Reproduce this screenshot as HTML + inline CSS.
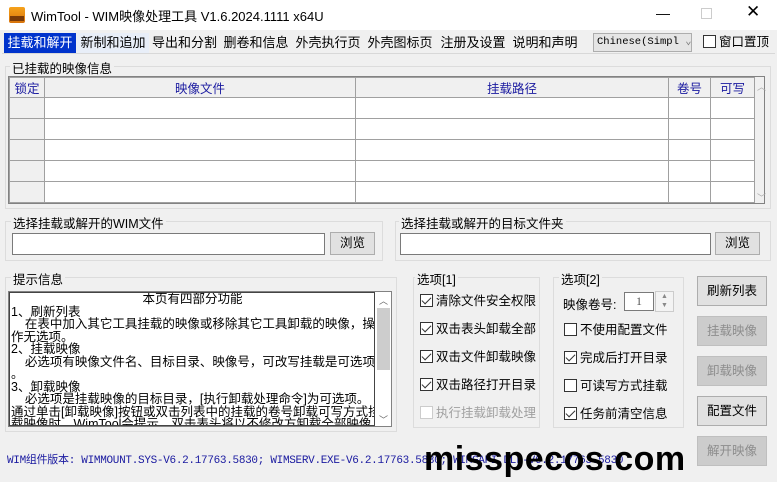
<!DOCTYPE html>
<html><head><meta charset="utf-8"><style>
*{box-sizing:border-box;margin:0;padding:0}
body{width:777px;height:482px;overflow:hidden;background:#f0f0f0;font-family:"Liberation Sans","Noto Sans CJK SC",sans-serif;font-size:12px;color:#000;position:relative}
.a{position:absolute}
.title{left:0;top:0;width:777px;height:30px;background:#fff}
.tab{top:33px;height:20px;line-height:19px;font-size:13px;text-align:center;color:#000;white-space:nowrap}
.grp{border:1px solid #dcdcdc}
.lbl{background:#f0f0f0;padding:0 2px;font-size:12.5px}
.inp{background:#fff;border:1px solid #7a7a7a}
.btn{background:#e1e1e1;border:1px solid #adadad;text-align:center;font-size:12.5px}
.dis{background:#cccccc;border:1px solid #bfbfbf;color:#8d8d8d}
.cb{font-size:12.5px;height:16px;line-height:16px;white-space:nowrap}
.cb i{display:inline-block;width:13px;height:13px;border:1px solid #333;background:#fff;vertical-align:-2px;margin-right:3px;position:relative}
.cb i.c:after{content:"";position:absolute;left:3px;top:0px;width:4px;height:8px;border:solid #333;border-width:0 1.5px 1.5px 0;transform:rotate(45deg)}
th,td{border:1px solid #a0a0a0}
</style></head><body>
<div class="a title"></div>
<div class="a" style="left:9px;top:7px;width:16px;height:16px;background:linear-gradient(#f6a21b,#d7730c);border-radius:2px"></div>
<div class="a" style="left:10px;top:16px;width:14px;height:5px;background:#7a3a08"></div>
<div class="a" style="left:31px;top:6px;font-size:13px">WimTool - WIM映像处理工具 V1.6.2024.1111 x64U</div>
<div class="a" style="left:656px;top:5px;font-size:14px">—</div>
<div class="a" style="left:701px;top:8px;width:11px;height:11px;border:1px solid #ccc"></div>
<div class="a" style="left:746px;top:2px;font-size:17px">✕</div>

<div class="a" style="left:2px;top:53px;width:773px;height:1px;background:#d8d8d8"></div>
<div class="a tab" style="left:4px;width:72px;background:#0033cc;color:#fff">挂载和解开</div>
<div class="a tab" style="left:77px;width:72px;background:#e8eef8">新制和追加</div>
<div class="a tab" style="left:150px;width:69px">导出和分割</div>
<div class="a tab" style="left:220px;width:72px">删卷和信息</div>
<div class="a tab" style="left:293px;width:70px">外壳执行页</div>
<div class="a tab" style="left:364px;width:72px">外壳图标页</div>
<div class="a tab" style="left:437px;width:72px">注册及设置</div>
<div class="a tab" style="left:510px;width:70px">说明和声明</div>
<div class="a" style="left:593px;top:33px;width:99px;height:19px;background:#e5e5e5;border:1px solid #adadad;font-family:'Liberation Mono','Noto Sans CJK SC',monospace;font-size:10.5px;line-height:17px;padding-left:3px;white-space:nowrap;overflow:hidden">Chinese(Simpl <span style="color:#777">⌄</span></div>
<div class="a cb" style="left:703px;top:34px"><i></i>窗口置顶</div>

<div class="a grp" style="left:5px;top:66px;width:766px;height:143px"></div>
<div class="a lbl" style="left:10px;top:58px">已挂载的映像信息</div>
<div class="a" style="left:8px;top:76px;width:757px;height:128px;background:#f0f0f0;border:1px solid #828282">
<table style="border-collapse:collapse;width:746px;table-layout:fixed;color:#1a1aa0;font-size:12.5px">
<tr style="height:20px;background:#f0f0f0;text-align:center"><th style="width:35px;font-weight:normal">锁定</th><th style="width:311px;font-weight:normal">映像文件</th><th style="width:313px;font-weight:normal">挂载路径</th><th style="width:42px;font-weight:normal">卷号</th><th style="font-weight:normal">可写</th></tr>
<tr style="height:21px"><td style="background:#f0f0f0"></td><td style="background:#fff"></td><td style="background:#fff"></td><td style="background:#fff"></td><td style="background:#fff"></td></tr>
<tr style="height:21px"><td style="background:#f0f0f0"></td><td style="background:#fff"></td><td style="background:#fff"></td><td style="background:#fff"></td><td style="background:#fff"></td></tr>
<tr style="height:21px"><td style="background:#f0f0f0"></td><td style="background:#fff"></td><td style="background:#fff"></td><td style="background:#fff"></td><td style="background:#fff"></td></tr>
<tr style="height:21px"><td style="background:#f0f0f0"></td><td style="background:#fff"></td><td style="background:#fff"></td><td style="background:#fff"></td><td style="background:#fff"></td></tr>
<tr style="height:21px"><td style="background:#f0f0f0"></td><td style="background:#fff"></td><td style="background:#fff"></td><td style="background:#fff"></td><td style="background:#fff"></td></tr>
</table></div>
<div class="a" style="left:757px;top:80px;font-size:9px;color:#aaa">︿</div>
<div class="a" style="left:757px;top:191px;font-size:9px;color:#aaa">﹀</div>

<div class="a grp" style="left:5px;top:221px;width:378px;height:40px"></div>
<div class="a lbl" style="left:11px;top:213px">选择挂载或解开的WIM文件</div>
<div class="a inp" style="left:12px;top:233px;width:313px;height:22px"></div>
<div class="a btn" style="left:330px;top:232px;width:45px;height:23px;line-height:21px">浏览</div>
<div class="a grp" style="left:395px;top:221px;width:376px;height:40px"></div>
<div class="a lbl" style="left:399px;top:213px">选择挂载或解开的目标文件夹</div>
<div class="a inp" style="left:400px;top:233px;width:311px;height:22px"></div>
<div class="a btn" style="left:715px;top:232px;width:45px;height:23px;line-height:21px">浏览</div>

<div class="a grp" style="left:5px;top:277px;width:392px;height:155px"></div>
<div class="a lbl" style="left:11px;top:269px">提示信息</div>
<div class="a" style="left:8px;top:291px;width:384px;height:136px;background:#fff;border:1px solid #828282"></div>
<div class="a" style="left:9px;top:292px;width:366px;height:134px;border:1px solid #444;font-size:12.5px;line-height:12.5px;padding-left:1px;overflow:hidden;white-space:nowrap">
<div style="text-align:center">本页有四部分功能</div>
1、刷新列表<br>&nbsp;&nbsp;&nbsp;&nbsp;在表中加入其它工具挂载的映像或移除其它工具卸载的映像，操<br>作无选项。<br>2、挂载映像<br>&nbsp;&nbsp;&nbsp;&nbsp;必选项有映像文件名、目标目录、映像号，可改写挂载是可选项<br>。<br>3、卸载映像<br>&nbsp;&nbsp;&nbsp;&nbsp;必选项是挂载映像的目标目录，[执行卸载处理命令]为可选项。<br>通过单击[卸载映像]按钮或双击列表中的挂载的卷号卸载可写方式挂<br>载映像时，WimTool会提示。双击表头将以不修改方卸载全部映像，</div>
<div class="a" style="left:377px;top:308px;width:13px;height:62px;background:#cdcdcd"></div>
<div class="a" style="left:379px;top:294px;font-size:9px;color:#666">︿</div>
<div class="a" style="left:379px;top:413px;font-size:9px;color:#666">﹀</div>

<div class="a grp" style="left:413px;top:277px;width:127px;height:151px"></div>
<div class="a lbl" style="left:415px;top:269px">选项[1]</div>
<div class="a cb" style="left:420px;top:293px"><i class="c"></i>清除文件安全权限</div>
<div class="a cb" style="left:420px;top:321px"><i class="c"></i>双击表头卸载全部</div>
<div class="a cb" style="left:420px;top:349px"><i class="c"></i>双击文件卸载映像</div>
<div class="a cb" style="left:420px;top:377px"><i class="c"></i>双击路径打开目录</div>
<div class="a cb" style="left:420px;top:405px;color:#a0a0a0"><i style="border-color:#ccc"></i>执行挂载卸载处理</div>

<div class="a grp" style="left:553px;top:277px;width:131px;height:151px"></div>
<div class="a lbl" style="left:559px;top:269px">选项[2]</div>
<div class="a" style="left:563px;top:294px;font-size:12.5px">映像卷号:</div>
<div class="a inp" style="left:624px;top:292px;width:30px;height:19px;text-align:center;font-family:'Liberation Serif',serif;line-height:17px;color:#555">1</div>
<div class="a" style="left:655px;top:291px;width:19px;height:21px;border:1px solid #ccc;background:#f3f3f3;font-size:7px;color:#888;text-align:center;line-height:9px">▲<br>▼</div>
<div class="a cb" style="left:564px;top:322px"><i></i>不使用配置文件</div>
<div class="a cb" style="left:564px;top:350px"><i class="c"></i>完成后打开目录</div>
<div class="a cb" style="left:564px;top:378px"><i></i>可读写方式挂载</div>
<div class="a cb" style="left:564px;top:406px"><i class="c"></i>任务前清空信息</div>

<div class="a btn" style="left:697px;top:276px;width:70px;height:30px;line-height:28px">刷新列表</div>
<div class="a btn dis" style="left:697px;top:316px;width:70px;height:30px;line-height:28px">挂载映像</div>
<div class="a btn dis" style="left:697px;top:356px;width:70px;height:30px;line-height:28px">卸载映像</div>
<div class="a btn" style="left:697px;top:396px;width:70px;height:30px;line-height:28px">配置文件</div>
<div class="a btn dis" style="left:697px;top:436px;width:70px;height:30px;line-height:28px">解开映像</div>

<div class="a" style="left:7px;top:451px;font-family:'Liberation Mono','Noto Sans CJK SC',monospace;font-size:11px;color:#1a1aa0;white-space:nowrap;letter-spacing:-0.3px">WIM组件版本: WIMMOUNT.SYS-V6.2.17763.5830; WIMSERV.EXE-V6.2.17763.5830; WIMGAPI.DLL-V6.2.17763.5830</div>
<div class="a" style="left:424px;top:440px;font-family:'Liberation Sans',sans-serif;font-weight:bold;font-size:34px;color:#000;letter-spacing:0.5px">misspecos.com</div>
</body></html>
